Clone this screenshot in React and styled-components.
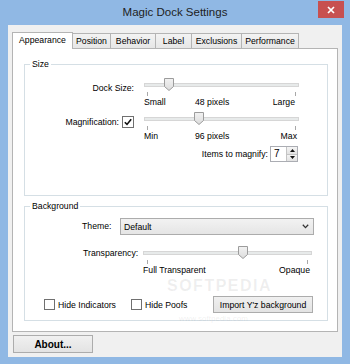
import React from 'react';
import styled, { createGlobalStyle } from 'styled-components';

const FONT = `"Liberation Sans", Arial, sans-serif`;

const Global = createGlobalStyle`
  html, body { margin: 0; padding: 0; background: #90b8e4; }
  body { font-family: ${FONT}; }
  * { box-sizing: border-box; }
`;

const Window = styled.div`
  width: 350px;
  height: 364px;
  background: #90b8e4;
  display: flex;
  flex-direction: column;
  overflow: hidden;
  font-family: ${FONT};
  font-size: 8.7px;
  color: #000;
`;

const TitleBar = styled.div`
  flex: none;
  height: 25px;
  display: grid;
  grid-template-columns: 1fr auto 1fr;
  align-items: start;
`;

const Title = styled.div`
  grid-column: 2;
  line-height: 25px;
  font-size: 11.5px;
  color: #1e1e1e;
  white-space: nowrap;
`;

const CloseButton = styled.div`
  grid-column: 3;
  justify-self: end;
  margin: 1px 6px 0 0;
  width: 26px;
  height: 17px;
  background: #c75050;
  display: flex;
  align-items: center;
  justify-content: center;
`;

const Client = styled.div`
  flex: 1;
  margin: 0 8px 7px 8px;
  background: #f0f0f0;
  padding: 7px 4px 0 4px;
  display: flex;
  flex-direction: column;
`;

const TabStrip = styled.div`
  height: 17px;
  margin-bottom: -1px;
  display: flex;
  align-items: flex-end;
  position: relative;
  z-index: 1;
`;

const Tab = styled.div`
  width: ${p => p.$w}px;
  height: ${p => (p.$active ? 17 : 16)}px;
  margin-left: ${p => (p.$first ? 0 : -1)}px;
  border: 1px solid #b4b4b4;
  border-bottom: ${p => (p.$active ? 'none' : '1px solid #b4b4b4')};
  background: ${p => (p.$active ? '#ffffff' : 'linear-gradient(#f3f3f3, #e6e6e6)')};
  display: flex;
  align-items: center;
  justify-content: center;
  padding-bottom: ${p => (p.$active ? 2 : 0)}px;
  position: relative;
  z-index: ${p => (p.$active ? 2 : 1)};
  white-space: nowrap;
`;

const TabPanel = styled.div`
  background: #fff;
  border: 1px solid #b4b4b4;
  padding: 9px 9px 10px 11px;
  display: flex;
  flex-direction: column;
  gap: 4px;
  position: relative;
`;

const Group = styled.fieldset`
  margin: 0;
  padding: 0 0 ${p => p.$pb}px 0;
  border: 1px solid #d5dfe5;
  min-width: 0;
`;

const Legend = styled.legend`
  margin-left: 5px;
  padding: 0 2px;
  line-height: 12px;
  font-size: 8.7px;
`;

const SizeGrid = styled.div`
  display: grid;
  grid-template-columns: 109px 155px;
  column-gap: 10px;
  row-gap: 4px;
  padding-top: 8px;
`;

const FieldLabel = styled.div`
  display: flex;
  justify-content: flex-end;
  align-items: center;
  gap: 3px;
  padding-top: 4px;
  height: 16px;
  line-height: 11px;
  white-space: nowrap;
`;

const SliderBox = styled.div`
  width: ${p => p.$w}px;
  display: flex;
  flex-direction: column;
  flex: none;
`;

const Rail = styled.div`
  position: relative;
  height: 13px;
`;

const Track = styled.div`
  position: absolute;
  left: 0;
  right: 0;
  top: 5px;
  height: 4px;
  background: #e7eaea;
  border: 1px solid #d6d6d6;
`;

const ThumbWrap = styled.div`
  position: absolute;
  top: 0;
  width: 10px;
  height: 13px;
`;

const Ticks = styled.div`
  height: 4px;
  margin-top: 1px;
  display: flex;
  justify-content: space-between;
  padding: 0 ${p => p.$inset}px;
`;

const Tick = styled.span`
  width: 1px;
  height: 4px;
  background: #a8a8a8;
`;

const SliderLabels = styled.div`
  display: grid;
  grid-template-columns: ${p => p.$first}px 1fr auto;
  line-height: 11px;
  margin-top: 1px;
  padding-right: ${p => p.$pr}px;
  white-space: nowrap;
`;

const Box = styled.span`
  width: ${p => p.$s}px;
  height: ${p => p.$s}px;
  border: 1px solid #707070;
  background: #fff;
  display: inline-flex;
  align-items: center;
  justify-content: center;
  flex: none;
`;

const ItemsRow = styled.div`
  grid-column: 2;
  display: flex;
  justify-content: flex-end;
  align-items: center;
  gap: 2px;
  padding-right: 1px;
  white-space: nowrap;
`;

const Spinner = styled.div`
  width: 28px;
  height: 16px;
  border: 1px solid #abadb3;
  background: #fff;
  display: flex;
`;

const SpinValue = styled.div`
  flex: 1;
  padding-left: 3px;
  line-height: 14px;
  font-size: 10px;
`;

const SpinButtons = styled.div`
  width: 11px;
  display: flex;
  flex-direction: column;
  border-left: 1px solid #c4c4c4;
`;

const SpinButton = styled.div`
  flex: 1;
  background: linear-gradient(#f4f4f4, #e2e2e2);
  display: flex;
  align-items: center;
  justify-content: center;
  & + & { border-top: 1px solid #c4c4c4; }
`;

const BgContent = styled.div`
  display: flex;
  flex-direction: column;
`;

const Row = styled.div`
  display: flex;
  align-items: ${p => p.$align || 'center'};
  margin-top: ${p => p.$mt}px;
  padding-left: ${p => p.$pl}px;
  padding-right: ${p => p.$pr || 0}px;
`;

const RowLabel = styled.div`
  width: ${p => p.$w}px;
  flex: none;
  line-height: 11px;
  padding-top: ${p => p.$pt || 0}px;
  white-space: nowrap;
`;

const Select = styled.div`
  width: 194px;
  height: 17px;
  border: 1px solid #acacac;
  background: linear-gradient(#f2f2f2, #e5e5e5);
  display: flex;
  align-items: center;
  justify-content: space-between;
  padding: 0 4px 0 3px;
`;

const CheckItem = styled.label`
  display: flex;
  align-items: center;
  gap: 3px;
  margin-left: ${p => p.$ml || 0}px;
  white-space: nowrap;
`;

const PushButton = styled.div`
  width: ${p => p.$w}px;
  height: ${p => p.$h}px;
  border: 1px solid #acacac;
  background: linear-gradient(#f0f0f0, #e3e3e3);
  display: flex;
  align-items: center;
  justify-content: center;
  white-space: nowrap;
  font-size: ${p => p.$fs || 8.7}px;
  font-weight: ${p => (p.$bold ? 700 : 400)};
  margin-left: ${p => p.$ml};
  margin-top: ${p => p.$mt || 0}px;
  flex: none;
`;

const Watermark = styled.div`
  position: absolute;
  left: ${p => p.$x}px;
  top: ${p => p.$y}px;
  font-size: ${p => p.$fs}px;
  line-height: 1;
  font-weight: ${p => (p.$bold ? 700 : 400)};
  letter-spacing: ${p => p.$ls || 0}px;
  color: rgba(120, 120, 120, 0.12);
  pointer-events: none;
  white-space: nowrap;
`;

const Thumb = () => (
  <svg width="10" height="13" viewBox="0 0 10 13">
    <defs>
      <linearGradient id="tg" x1="0" y1="0" x2="0" y2="1">
        <stop offset="0" stopColor="#f2f2f2" />
        <stop offset="1" stopColor="#dcdcdc" />
      </linearGradient>
    </defs>
    <path d="M0.5 0.5 H9.5 V8.5 L5 12.5 L0.5 8.5 Z" fill="url(#tg)" stroke="#9c9c9c" />
  </svg>
);

const Slider = ({ w, thumb, inset, first, pr, left, mid, right }) => (
  <SliderBox $w={w}>
    <Rail>
      <Track />
      <ThumbWrap style={{ left: thumb }}>
        <Thumb />
      </ThumbWrap>
    </Rail>
    <Ticks $inset={inset}>
      <Tick />
      <Tick />
    </Ticks>
    <SliderLabels $first={first} $pr={pr}>
      <span>{left}</span>
      <span>{mid}</span>
      <span>{right}</span>
    </SliderLabels>
  </SliderBox>
);

const Check = ({ size, checked }) => (
  <Box $s={size}>
    {checked && (
      <svg width="8" height="8" viewBox="0 0 8 8">
        <path d="M0.8 4.2 L3 6.4 L7.2 1.2" fill="none" stroke="#111" strokeWidth="1.6" />
      </svg>
    )}
  </Box>
);

const Arrow = ({ up }) => (
  <svg width="5" height="3" viewBox="0 0 5 3">
    <path d={up ? 'M0 3 L2.5 0 L5 3 Z' : 'M0 0 L5 0 L2.5 3 Z'} fill="#111" />
  </svg>
);

const tabs = [
  { label: 'Appearance', w: 61 },
  { label: 'Position', w: 39 },
  { label: 'Behavior', w: 46 },
  { label: 'Label', w: 37 },
  { label: 'Exclusions', w: 51 },
  { label: 'Performance', w: 58 },
];

export default function App() {
  return (
    <>
      <Global />
      <Window>
        <TitleBar>
          <Title>Magic Dock Settings</Title>
          <CloseButton>
            <svg width="8" height="8" viewBox="0 0 8 8">
              <path d="M1 1 L7 7 M7 1 L1 7" stroke="#fff" strokeWidth="1.7" />
            </svg>
          </CloseButton>
        </TitleBar>
        <Client>
          <TabStrip>
            {tabs.map((t, i) => (
              <Tab key={t.label} $w={t.w} $first={i === 0} $active={i === 0}>
                {t.label}
              </Tab>
            ))}
          </TabStrip>
          <TabPanel>
            <Group $pb={33}>
              <Legend>Size</Legend>
              <SizeGrid>
                <FieldLabel>Dock Size:</FieldLabel>
                <Slider w={155} thumb={20} inset={3} first={51} pr={4}
                  left="Small" mid="48 pixels" right="Large" />
                <FieldLabel>
                  Magnification:
                  <Check size={12} checked />
                </FieldLabel>
                <Slider w={155} thumb={50} inset={3} first={51} pr={2}
                  left="Min" mid="96 pixels" right="Max" />
                <ItemsRow>
                  Items to magnify:
                  <Spinner>
                    <SpinValue>7</SpinValue>
                    <SpinButtons>
                      <SpinButton><Arrow up /></SpinButton>
                      <SpinButton><Arrow /></SpinButton>
                    </SpinButtons>
                  </Spinner>
                </ItemsRow>
              </SizeGrid>
            </Group>
            <Group $pb={7}>
              <Legend>Background</Legend>
              <BgContent>
                <Row $mt={6} $pl={57}>
                  <RowLabel $w={38}>Theme:</RowLabel>
                  <Select>
                    <span>Default</span>
                    <svg width="7" height="5" viewBox="0 0 7 5">
                      <path d="M0.8 0.8 L3.5 3.6 L6.2 0.8" fill="none" stroke="#333" strokeWidth="1.3" />
                    </svg>
                  </Select>
                </Row>
                <Row $mt={11} $pl={58} $align="flex-start">
                  <RowLabel $w={60} $pt={2}>Transparency:</RowLabel>
                  <Slider w={169} thumb={95} inset={4} first={51} pr={2}
                    left="Full Transparent" mid="" right="Opaque" />
                </Row>
                <Row $mt={20} $pl={19} $pr={14}>
                  <CheckItem>
                    <Check size={11} />
                    Hide Indicators
                  </CheckItem>
                  <CheckItem $ml={15}>
                    <Check size={11} />
                    Hide Poofs
                  </CheckItem>
                  <PushButton $w={100} $h={17} $ml="auto">Import Y'z background</PushButton>
                </Row>
              </BgContent>
            </Group>
            <Watermark $x={154} $y={229} $fs={16} $bold $ls={1.5}>SOFTPEDIA</Watermark>
            <Watermark $x={166} $y={266} $fs={8}>www.softpedia.com</Watermark>
          </TabPanel>
          <PushButton $w={80} $h={18} $ml="1px" $mt={3} $fs={10} $bold>About...</PushButton>
        </Client>
      </Window>
    </>
  );
}
